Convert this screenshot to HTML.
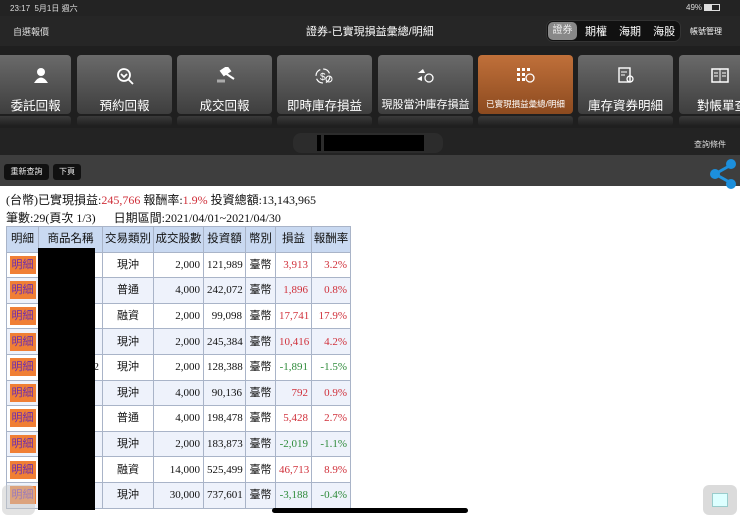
<!DOCTYPE html>
<html><head><meta charset="utf-8"><style>
*{margin:0;padding:0;box-sizing:border-box}
body{width:740px;height:517px;overflow:hidden;background:#fff;font-family:"Liberation Sans","Noto Sans CJK TC",sans-serif;position:relative}
.top{position:absolute;left:0;top:0;width:740px;height:186px;background:#232323}
.sb{position:absolute;top:3px;font-size:8px;color:#ddd}
.nav{position:absolute;top:16px;left:0;width:740px;height:30px;background:#262626}
.tb{position:absolute;top:46px;left:0;width:740px;height:82px;background:#1f1f1f}
.btn{position:absolute;top:55px;width:95px;height:59px;border-radius:4px;background:linear-gradient(#6a6a6a,#3e3e3e);color:#fff;font-size:12.5px;text-align:center}
.btn .ic{position:absolute;top:12px;left:0;width:100%;height:18px}
.btn .lb{position:absolute;top:40px;left:0;width:100%;white-space:nowrap}
.refl{position:absolute;top:116px;width:95px;height:10px;background:linear-gradient(#3a3a3a,#1f1f1f);border-radius:3px}
.gray{position:absolute;top:155px;left:0;width:740px;height:31px;background:#3e3e3e}
.sbtn{position:absolute;top:164px;height:16px;background:#111;color:#eee;font-size:8px;line-height:16px;text-align:center;border-radius:3px}
.info{position:absolute;left:6px;font-size:12px;color:#111;font-family:"Liberation Serif","Noto Sans CJK TC",serif;white-space:nowrap}
.r{color:#d0313b}.g{color:#2e8b3a}
table{position:absolute;left:6px;top:226px;border-collapse:collapse;table-layout:fixed;width:344px;font-family:"Liberation Serif","Noto Sans CJK TC",serif;font-size:11px}
td,th{border:1px solid #a9b4c8;height:25.6px;padding:0 3px;white-space:nowrap;overflow:hidden;line-height:14px}
th{background:#c9d9f1;font-weight:normal;font-size:11.5px;color:#111;text-align:center;padding:0;font-family:"Liberation Sans","Noto Sans CJK TC",sans-serif}
td{text-align:right;color:#111}
tr:nth-child(odd) td{background:#eef2fb}
td.c{text-align:center;padding:0}
.m{display:inline-block;background:#f07f35;color:#6a2db0;font-size:11px;padding:2px 2px;line-height:14px}
</style></head><body>
<div class="top"></div>
<div class="sb" style="left:10px">23:17&nbsp; 5月1日 週六</div>
<div class="sb" style="left:686px">49% <span style="display:inline-block;width:16px;height:7px;border:1px solid #ddd;vertical-align:middle"><span style="display:block;width:7px;height:5px;background:#ddd"></span></span></div>
<div class="nav">
<div style="position:absolute;left:13px;top:9px;font-size:9px;color:#ddd">自選報價</div>
<div style="position:absolute;left:306px;top:7px;font-size:11px;color:#fff">證券-已實現損益彙總/明細</div>
<div style="position:absolute;left:546px;top:4px;width:135px;height:22px;border-radius:7px;background:#111;border:1px solid #333"></div>
<div style="position:absolute;left:548px;top:6px;width:29px;height:18px;border-radius:5px;background:#888;color:#eee;font-size:10px;line-height:18px;text-align:center">證券</div>
<div style="position:absolute;left:585px;top:7px;font-size:11px;color:#fff;word-spacing:9px">期權 海期 海股</div>
<div style="position:absolute;left:690px;top:10px;font-size:8px;color:#fff">帳號管理</div>
</div>
<div class="tb"></div>
<div class="btn" style="left:-24px"><div class="ic"><svg width="14" height="16" viewBox="0 0 14 16" style="margin-left:35px"><circle cx="7" cy="5" r="4" fill="#fff"/><path d="M0 16 Q7 5 14 16Z" fill="#fff"/></svg></div><div class="lb">&nbsp;&nbsp;&nbsp;&nbsp;&nbsp;&nbsp;&nbsp;委託回報</div></div>
<div class="btn" style="left:77px"><div class="ic"><svg width="18" height="18" viewBox="0 0 18 18"><circle cx="8" cy="8" r="6" fill="none" stroke="#fff" stroke-width="1.8"/><path d="M5 7 L8 10 L11 7 M12.5 12.5 L17 17" stroke="#fff" stroke-width="1.8" fill="none"/></svg></div><div class="lb">預約回報</div></div>
<div class="btn" style="left:177px"><div class="ic"><svg width="20" height="16" viewBox="0 0 20 16"><path d="M6 4 L12 0 L15 4 L9 8Z M10 6 L19 12" stroke="#fff" stroke-width="2" fill="#fff"/><path d="M2 14 h8" stroke="#aaa" stroke-width="3"/></svg></div><div class="lb">成交回報</div></div>
<div class="btn" style="left:277px"><div class="ic"><svg width="20" height="18" viewBox="0 0 20 18"><circle cx="8" cy="9" r="7" fill="none" stroke="#fff" stroke-width="1.2" stroke-dasharray="8 3"/><text x="5" y="13" font-size="10" fill="#fff">$</text><circle cx="14" cy="12" r="3" fill="none" stroke="#fff"/></svg></div><div class="lb">即時庫存損益</div></div>
<div class="btn" style="left:378px"><div class="ic"><svg width="20" height="18" viewBox="0 0 20 18"><path d="M2 6 L7 2 L9 6Z M1 12 L6 9 L6 14Z" fill="#fff"/><circle cx="13" cy="11" r="4" fill="none" stroke="#fff" stroke-width="1.3"/></svg></div><div class="lb" style="font-size:11px;top:41px">現股當沖庫存損益</div></div>
<div class="btn" style="left:478px;background:linear-gradient(#c0703a,#8c4a1f)"><div class="ic"><svg width="20" height="18" viewBox="0 0 20 18"><path d="M1 1h3v3H1zM6 1h3v3H6zM11 1h3v3h-3zM1 6h3v3H1zM6 6h3v3H6zM1 11h3v3H1zM6 11h3v3H6z" fill="#fff"/><circle cx="14" cy="11" r="4" fill="none" stroke="#fff" stroke-width="1.3"/></svg></div><div class="lb" style="font-size:8.5px;top:43px">已實現損益彙總/明細</div></div>
<div class="btn" style="left:578px"><div class="ic"><svg width="20" height="18" viewBox="0 0 20 18"><rect x="3" y="1" width="11" height="14" fill="none" stroke="#fff" stroke-width="1.4"/><path d="M5 5h6M5 8h4" stroke="#fff"/><circle cx="14" cy="12" r="3" fill="none" stroke="#fff" stroke-width="1.3"/></svg></div><div class="lb">庫存資券明細</div></div>
<div class="btn" style="left:679px"><div class="ic"><svg width="20" height="18" viewBox="0 0 20 18" style="margin-left:-14px"><rect x="2" y="2" width="16" height="13" fill="none" stroke="#fff" stroke-width="1.5"/><path d="M10 2v13M4 6h4M12 6h4M4 9h4M12 9h4" stroke="#fff"/></svg></div><div class="lb" style="text-align:left;padding-left:18px">對帳單查</div></div>
<div class="refl" style="left:-24px"></div><div class="refl" style="left:77px"></div><div class="refl" style="left:177px"></div><div class="refl" style="left:277px"></div><div class="refl" style="left:378px"></div><div class="refl" style="left:478px"></div><div class="refl" style="left:578px"></div><div class="refl" style="left:679px"></div>
<div style="position:absolute;left:293px;top:133px;width:150px;height:20px;border-radius:8px;background:#2c2c2c"></div>
<div style="position:absolute;left:317px;top:135px;width:4px;height:16px;background:#000"></div>
<div style="position:absolute;left:324px;top:135px;width:100px;height:16px;background:#000"></div>
<div style="position:absolute;left:694px;top:139px;font-size:8px;color:#ddd">查詢條件</div>
<div class="gray"></div>
<div class="sbtn" style="left:4px;width:45px">重新查詢</div>
<div class="sbtn" style="left:53px;width:28px">下頁</div>
<svg style="position:absolute;left:708px;top:159px" width="30" height="30" viewBox="0 0 30 30"><path d="M7 15 L23 6 M7 15 L23 24" stroke="#1c8fdc" stroke-width="3"/><circle cx="7" cy="15" r="5" fill="#1c8fdc"/><circle cx="23" cy="5" r="5" fill="#1c8fdc"/><circle cx="23" cy="25" r="5" fill="#1c8fdc"/></svg>
<div class="info" style="top:191px">(台幣)已實現損益:<span class="r">245,766</span> 報酬率:<span class="r">1.9%</span> 投資總額:13,143,965</div>
<div class="info" style="top:209px">筆數:29(頁次 1/3)&nbsp;&nbsp;&nbsp;&nbsp;&nbsp; 日期區間:2021/04/01~2021/04/30</div>
<table>
<colgroup><col style="width:32px"><col style="width:64px"><col style="width:51px"><col style="width:50px"><col style="width:42px"><col style="width:30px"><col style="width:36px"><col style="width:39px"></colgroup>
<tr><th>明細</th><th>商品名稱</th><th>交易類別</th><th>成交股數</th><th>投資額</th><th>幣別</th><th>損益</th><th>報酬率</th></tr>
<tr><td class="c"><span class="m">明細</span></td><td></td><td class="c">現沖</td><td>2,000</td><td>121,989</td><td class="c">臺幣</td><td class="r">3,913</td><td class="r">3.2%</td></tr>
<tr><td class="c"><span class="m">明細</span></td><td></td><td class="c">普通</td><td>4,000</td><td>242,072</td><td class="c">臺幣</td><td class="r">1,896</td><td class="r">0.8%</td></tr>
<tr><td class="c"><span class="m">明細</span></td><td></td><td class="c">融資</td><td>2,000</td><td>99,098</td><td class="c">臺幣</td><td class="r">17,741</td><td class="r">17.9%</td></tr>
<tr><td class="c"><span class="m">明細</span></td><td></td><td class="c">現沖</td><td>2,000</td><td>245,384</td><td class="c">臺幣</td><td class="r">10,416</td><td class="r">4.2%</td></tr>
<tr><td class="c"><span class="m">明細</span></td><td>2</td><td class="c">現沖</td><td>2,000</td><td>128,388</td><td class="c">臺幣</td><td class="g">-1,891</td><td class="g">-1.5%</td></tr>
<tr><td class="c"><span class="m">明細</span></td><td></td><td class="c">現沖</td><td>4,000</td><td>90,136</td><td class="c">臺幣</td><td class="r">792</td><td class="r">0.9%</td></tr>
<tr><td class="c"><span class="m">明細</span></td><td></td><td class="c">普通</td><td>4,000</td><td>198,478</td><td class="c">臺幣</td><td class="r">5,428</td><td class="r">2.7%</td></tr>
<tr><td class="c"><span class="m">明細</span></td><td></td><td class="c">現沖</td><td>2,000</td><td>183,873</td><td class="c">臺幣</td><td class="g">-2,019</td><td class="g">-1.1%</td></tr>
<tr><td class="c"><span class="m">明細</span></td><td></td><td class="c">融資</td><td>14,000</td><td>525,499</td><td class="c">臺幣</td><td class="r">46,713</td><td class="r">8.9%</td></tr>
<tr><td class="c"><span class="m">明細</span></td><td></td><td class="c">現沖</td><td>30,000</td><td>737,601</td><td class="c">臺幣</td><td class="g">-3,188</td><td class="g">-0.4%</td></tr>
</table>
<div style="position:absolute;left:38px;top:248px;width:57px;height:262px;background:#000"></div>
<div style="position:absolute;left:2px;top:485px;width:33px;height:30px;border-radius:6px;background:rgba(200,200,200,.5)"></div>
<div style="position:absolute;left:703px;top:485px;width:34px;height:30px;border-radius:6px;background:rgba(210,210,210,.8)"><div style="margin:8px 9px;width:16px;height:14px;border:1px solid #9cc;background:#dff"></div></div>
<div style="position:absolute;left:272px;top:508px;width:196px;height:5px;border-radius:3px;background:#000"></div>
</body></html>
